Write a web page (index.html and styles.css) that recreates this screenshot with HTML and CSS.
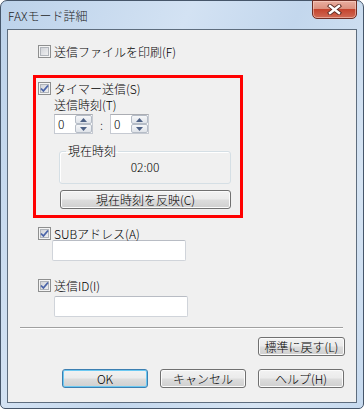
FILE: index.html
```html
<!DOCTYPE html>
<html lang="ja">
<head>
    <meta charset="UTF-8">
    <meta name="viewport" content="width=device-width, initial-scale=1.0">
    <title>FAXモード詳細</title>
    <link rel="stylesheet" href="styles.css">
</head>
<body>
    <div class="window">
        <div class="titlebar">
            <span class="title">FAXモード詳細</span>
            <div class="close">
                <svg width="15" height="11" viewBox="0 0 15 11">
                    <path d="M3 2 L12 9 M12 2 L3 9" stroke="#5a2a22" stroke-width="4.2" stroke-linecap="square"/>
                    <path d="M3 2 L12 9 M12 2 L3 9" stroke="#ffffff" stroke-width="2.4" stroke-linecap="square"/>
                </svg>
            </div>
        </div>
        <div class="client">
            <label class="check first"><span class="box"></span>送信ファイルを印刷(F)</label>

            <div class="timer">
                <label class="check"><span class="box"><svg width="9" height="9" viewBox="0 0 9 9"><path d="M1 4.5 L3.4 7 L8 1.5" fill="none" stroke="#4a64a8" stroke-width="1.8"/></svg></span>タイマー送信(S)</label>
                <div class="caption">送信時刻(T)</div>
                <div class="spins">
                    <div class="spin">
                        <span class="val">0</span>
                        <span class="arrows">
                            <span class="arrow"><svg width="7" height="4" viewBox="0 0 7 4"><path d="M0 4 L3.5 0 L7 4 Z" fill="#4d6185"/></svg></span>
                            <span class="arrow"><svg width="7" height="4" viewBox="0 0 7 4"><path d="M0 0 L3.5 4 L7 0 Z" fill="#4d6185"/></svg></span>
                        </span>
                    </div>
                    <span class="colon">:</span>
                    <div class="spin">
                        <span class="val">0</span>
                        <span class="arrows">
                            <span class="arrow"><svg width="7" height="4" viewBox="0 0 7 4"><path d="M0 4 L3.5 0 L7 4 Z" fill="#4d6185"/></svg></span>
                            <span class="arrow"><svg width="7" height="4" viewBox="0 0 7 4"><path d="M0 0 L3.5 4 L7 0 Z" fill="#4d6185"/></svg></span>
                        </span>
                    </div>
                </div>
                <fieldset class="now">
                    <legend>現在時刻</legend>
                    <div class="clock">02:00</div>
                </fieldset>
                <button class="btn reflect">現在時刻を反映(C)</button>
            </div>

            <label class="check sub"><span class="box"><svg width="9" height="9" viewBox="0 0 9 9"><path d="M1 4.5 L3.4 7 L8 1.5" fill="none" stroke="#4a64a8" stroke-width="1.8"/></svg></span>SUBアドレス(A)</label>
            <div class="field field-sub"></div>

            <label class="check sender"><span class="box"><svg width="9" height="9" viewBox="0 0 9 9"><path d="M1 4.5 L3.4 7 L8 1.5" fill="none" stroke="#4a64a8" stroke-width="1.8"/></svg></span>送信ID(I)</label>
            <div class="field field-id"></div>

            <div class="sep"></div>

            <div class="reset-row">
                <button class="btn reset">標準に戻す(L)</button>
            </div>
            <div class="actions">
                <button class="btn default">OK</button>
                <button class="btn">キャンセル</button>
                <button class="btn">ヘルプ(H)</button>
            </div>
        </div>
    </div>
</body>
</html>
```

FILE: styles.css
```css
body {
    margin: 0;
    font-family: "Noto Sans CJK JP", "Noto Sans", sans-serif;
    font-size: 12px;
    font-weight: 300;
    line-height: 15px;
    color: #000;
    background: #ffffff;
}
.window {
    width: 364px;
    height: 409px;
    box-sizing: border-box;
    border: 1px solid #46566a;
    border-radius: 7px 7px 5px 5px;
    background: linear-gradient(115deg, #bcd2ea 0%, #d3e2f3 35%, #c3d7ed 55%, #d6e4f3 80%, #c7daef 100%);
    padding: 0 6px 5px 6px;
    display: flex;
    flex-direction: column;
}
.titlebar {
    height: 28px;
    display: flex;
    justify-content: space-between;
    align-items: flex-start;
}
.title {
    padding: 7px 0 0 1px;
    color: #1e1e1e;
}
.close {
    width: 45px;
    height: 19px;
    box-sizing: border-box;
    margin-top: -1px;
    border: 1px solid #6f2e25;
    border-radius: 0 0 5px 5px;
    background: linear-gradient(#e9aea0 0%, #dc9180 45%, #c4442e 50%, #d06a55 100%);
    box-shadow: inset 0 0 0 1px rgba(255, 220, 210, 0.5);
    display: flex;
    justify-content: center;
    align-items: center;
}
.client {
    flex: 1;
    border: 1px solid #5e6d7e;
    background: #f0f0f0;
}
.check {
    display: flex;
    align-items: center;
    gap: 3px;
    height: 15px;
}
.box {
    width: 13px;
    height: 13px;
    box-sizing: border-box;
    border: 1px solid #8e8f8f;
    background: linear-gradient(135deg, #c9ccd2, #f7f7f7);
    box-shadow: inset 0 0 0 1px #f4f4f4, inset 0 0 0 2px #b0b4ba;
    display: flex;
    justify-content: center;
    align-items: center;
}
.first {
    margin: 14px 0 0 30px;
}
.timer {
    margin: 16px 0 0 25px;
    width: 210px;
    height: 143px;
    box-sizing: border-box;
    border: 3px solid #ff0000;
    padding: 3px 0 0 2px;
}
.caption {
    margin: 1px 0 0 16px;
    height: 15px;
}
.spins {
    display: flex;
    align-items: center;
    margin: 2px 0 0 16px;
}
.spin {
    display: flex;
    width: 39px;
    height: 20px;
    box-sizing: border-box;
    border: 1px solid #c6cad2;
    border-top-color: #abadb3;
    background: #fff;
}
.val {
    flex: 1;
    padding-left: 3px;
    line-height: 18px;
}
.arrows {
    width: 17px;
    display: flex;
    flex-direction: column;
}
.arrow {
    flex: 1;
    box-sizing: border-box;
    border: 1px solid #b5bcc6;
    border-radius: 2px;
    background: linear-gradient(#f6f7f9, #dfe3e9);
    display: flex;
    justify-content: center;
    align-items: center;
}
.colon {
    width: 17px;
    text-align: center;
}
.now {
    margin: 11px 0 0 21px;
    padding: 0;
    width: 172px;
    box-sizing: border-box;
    border: 1px solid #d5dfe5;
    border-radius: 3px;
    box-shadow: inset 1px 1px 0 #fff;
}
.now legend {
    margin-left: 6px;
    padding: 0 2px;
    line-height: 12px;
}
.clock {
    text-align: center;
    line-height: 20px;
    padding-bottom: 6px;
}
.btn {
    font: inherit;
    color: #000;
    height: 19px;
    padding: 0;
    box-sizing: border-box;
    border: 1px solid #707070;
    border-radius: 3px;
    background: linear-gradient(#f2f2f2 0%, #ebebeb 48%, #dddddd 52%, #cfcfcf 100%);
    box-shadow: inset 0 0 0 1px #fbfbfb;
    line-height: 16px;
}
.reflect {
    display: block;
    width: 171px;
    margin: 6px 0 0 22px;
}
.sub {
    margin: 8px 0 0 30px;
    height: 14px;
}
.sender {
    margin: 17px 0 0 30px;
    height: 14px;
}
.field {
    width: 134px;
    height: 21px;
    box-sizing: border-box;
    border: 1px solid #d0d4da;
    border-top-color: #b8bcc4;
    border-radius: 2px;
    background: #fff;
}
.field-sub {
    margin-left: 44px;
}
.field-id {
    margin: 4px 0 0 46px;
}
.sep {
    margin: 10px 0 0 12px;
    width: 323px;
    height: 1px;
    background: #a0a0a0;
    border-bottom: 1px solid #fff;
}
.reset-row {
    display: flex;
    justify-content: flex-end;
    margin: 8px 11px 0 0;
}
.reset {
    width: 87px;
}
.actions {
    display: flex;
    gap: 12px;
    margin: 13px 0 0 54px;
}
.actions .btn {
    width: 86px;
}
.default {
    border-color: #3c7fb1;
    box-shadow: inset 0 0 0 1px #6cc9f2;
}
```
